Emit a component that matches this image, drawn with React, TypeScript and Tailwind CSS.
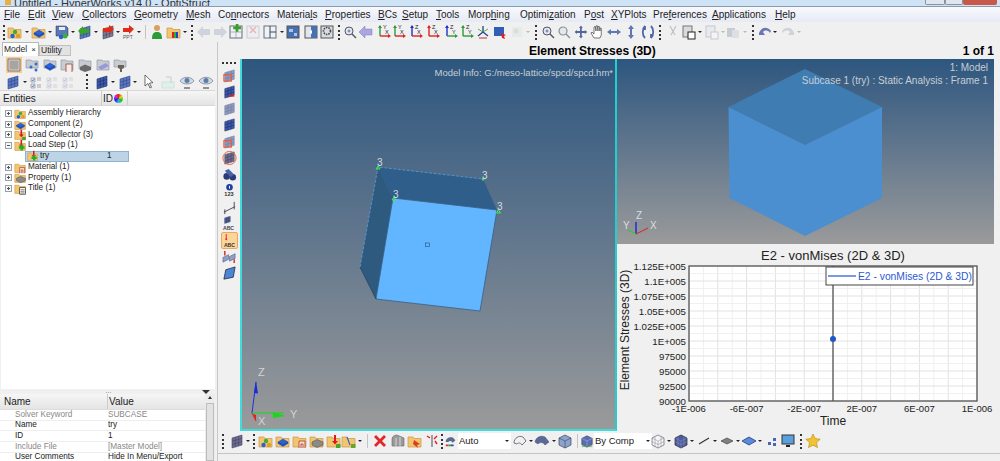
import { ReactNode } from "react";

const FONT = "font-['Liberation_Sans',Arial,sans-serif]";

const folder = <path d="M1 4h5l1 1.5h7V14H1z" fill="#f2c66e" stroke="#c9944a" strokeWidth=".7" />;
const grid = (a: string, b: string) => (
  <g stroke={b} strokeWidth=".6">
    <path d="M3 5l10-3v10L3 15z" fill={a} />
    <path d="M6.3 4v10M9.6 3v10M3 8.3l10-3M3 11.6l10-3" fill="none" />
  </g>
);
const disc = (c: string) => <path d="M3 9l5-3 5 3-5 3z M3 9v1.5l5 3 5-3V9l-5 3z" fill={c} stroke="#123a8c" strokeWidth=".4" />;
const down = <path d="M6 1v6H4l3 3.5L10 7H8V1z" fill="#e01818" />;
const win = <rect x="2" y="2" width="12" height="12" fill="#eef1f6" stroke="#66707c" />;
const axes = (a: string, b: string, l1: string, l2: string) => (
  <g>
    <path d="M4 2v10" stroke={a} strokeWidth="1.4" fill="none" />
    <path d="M4 12h9" stroke={b} strokeWidth="1.4" fill="none" />
    <path d="M4 1l-2 3h4z" fill={a} />
    <path d="M15 12l-3-2v4z" fill={b} />
    <text x="7" y="5" fontSize="5.5" fill="#223">{l1}</text>
    <text x="9" y="10" fontSize="5.5" fill="#223">{l2}</text>
  </g>
);

const ICONS: Record<string, ReactNode> = {
  fAsm: <>{folder}<circle cx="8" cy="8" r="2.2" fill="#3fae35" /><circle cx="5.5" cy="12" r="2.2" fill="#2f5fd0" /><circle cx="11" cy="12" r="2.2" fill="#e0a020" /></>,
  fComp: <>{folder}{disc("#2a62d8")}</>,
  fMat: <>{folder}<path d="M7 15V8h6v7M9 15v-4h2v4" fill="#f6dccf" stroke="#b03a26" strokeWidth=".8" /></>,
  fProp: <>{folder}<path d="M3 9l5-2.5 6 2.5v3l-6 2.5L3 12z" fill="#8a8a8a" stroke="#444" strokeWidth=".5" /></>,
  fLoad: <>{folder}<g transform="translate(2 1)">{down}</g><rect x="10" y="11" width="4.5" height="4" fill="#4aa52a" /></>,
  fStep: <>{folder}<g transform="translate(2 0)">{down}</g><path d="M6 9h2V7h3v2h2v3h-2v2H8v-2H6z" fill="#22b02a" /></>,
  fTitle: <>{folder}<rect x="7" y="7" width="7" height="8" fill="#f5f5f5" stroke="#222" strokeWidth=".8" /><path d="M8 9.500h5M8 11.500h5M8 13.500h5" stroke="#222" strokeWidth=".6" /></>,
  fRain: <>{folder}<rect x="6" y="8" width="2" height="6" fill="#e02020" /><rect x="8" y="8" width="2" height="6" fill="#30b030" /><rect x="10" y="8" width="2" height="6" fill="#2040d0" /></>,
  fLine: <>{folder}<path d="M6 4l3 8" stroke="#3060d0" strokeWidth="1.2" /><rect x="10" y="11" width="4.500" height="4" fill="#6aa52a" /></>,
  fRed: <>{folder}<path d="M7 7l6 4-3 1 1 3-5-4z" fill="#e03a20" /></>,
  save: <><path d="M2 2h10l2 2v8H2z" fill="#5878b8" stroke="#334" strokeWidth=".5" /><rect x="5" y="3" width="6" height="3" fill="#e8edf5" /><circle cx="11" cy="12" r="2.500" fill="#3fae35" /><circle cx="7" cy="13" r="2.200" fill="#2f5fd0" /></>,
  imp: <>{grid("#5b78c4", "#33478a")}<path d="M1 7l5-5v3h6v4H6v3z" fill="#37a81e" /></>,
  exp: <>{grid("#7d7d9a", "#44445c")}<path d="M14 5L9 1v3H3v4h6v2z" fill="#e02a1a" /></>,
  ppt: <><path d="M14 5L9 1v3H3v4h6v2z" fill="#e02a1a" /><text x="3" y="15" fontSize="5" fill="#555">PPT</text></>,
  person: <><circle cx="8" cy="4" r="3" fill="#d8a060" /><path d="M3 15c0-6 2-7 5-7s5 1 5 7z" fill="#2f9a3a" /></>,
  left: <path d="M1 8l6-6v3h7v6H7v3z" fill="#cfd4dc" />,
  right: <path d="M15 8L9 2v3H2v6h7v3z" fill="#cfd4dc" />,
  plus: <>{win}<path d="M2 8h12M8 2v12" stroke="#889" strokeWidth=".6" /><path d="M6 1h4v4h4v4h-4v4H6V9H2V5h4z" transform="scale(.65) translate(6 -1)" fill="#3aa02a" /></>,
  minus: <><rect x="2" y="2" width="12" height="12" fill="#eceef2" stroke="#c8ccd2" /><path d="M5 3l6 6M11 3L5 9" stroke="#e8b8b8" strokeWidth="1.500" /></>,
  split: <>{win}<path d="M8 2v12M8 8h6" stroke="#3a4654" strokeWidth="1" /></>,
  blueWin: <><rect x="2" y="2" width="12" height="12" fill="#4670b0" stroke="#555" /><rect x="4" y="5" width="4" height="3" fill="#a8c4ec" /><rect x="9" y="9" width="3" height="3" fill="#a8c4ec" /></>,
  halfWin: <><rect x="2" y="2" width="12" height="12" fill="#dfe6f0" stroke="#555" /><rect x="8" y="2" width="6" height="12" fill="#4670b0" /><path d="M6 8l3-2v4z" fill="#fff" /></>,
  gearWin: <><rect x="2" y="2" width="12" height="12" fill="#d8dce4" stroke="#555" /><circle cx="8" cy="7" r="3.500" fill="none" stroke="#444" strokeWidth="1.600" strokeDasharray="1.500 1" /></>,
  mag: <><circle cx="7" cy="7" r="4" fill="#dfe8f2" stroke="#556" strokeWidth="1" /><path d="M10 10l4 4" stroke="#556" strokeWidth="1.500" /><path d="M5.500 7h3M7 5.500v3" stroke="#556" strokeWidth=".7" /></>,
  arr: <path d="M1 8l6-6v3h7v6H7v3z" fill="#a9a6e0" stroke="#7d7cc0" strokeWidth=".5" />,
  axYX: axes("#2f9a3a", "#e02020", "Y", "X"),
  axZX: axes("#2030d0", "#e02020", "Z", "X"),
  axZXr: axes("#e02020", "#e02020", "Z", "X"),
  axZY: axes("#2030d0", "#2f9a3a", "Z", "Y"),
  axZYg: axes("#2f9a3a", "#2f9a3a", "Z", "Y"),
  triad: <><path d="M8 8V2M8 8l-5 4M8 8l5 4" stroke="#27408a" strokeWidth="1.300" /><path d="M8 8l-5-3M8 8l5-3" stroke="#2f9a3a" strokeWidth=".8" /><path d="M4 14h8" stroke="#c03020" strokeWidth="1" /></>,
  screen: <><rect x="2" y="3" width="10" height="9" fill="#2f5fb8" /><path d="M9 9l5 2-2 1 1 3-3-1z" fill="#e02020" /></>,
  ghost: <><rect x="3" y="3" width="10" height="10" fill="#dbe6dc" /><circle cx="7" cy="7" r="2.500" fill="#b8c8b0" /></>,
  magDim: <><circle cx="7" cy="7" r="4" fill="#e4e8ee" stroke="#8a8f98" strokeWidth="1.200" /><path d="M10 10l4 4" stroke="#8a8f98" strokeWidth="1.500" /></>,
  cross: <path d="M8 1.500l1.800 2.500H8.800v3h3V6l2.500 2-2.500 2V9h-3v3h1L8 14.500 6 12h1V9H4v1L1.500 8 4 6v1h3V4H6z" fill="#5468a0" />,
  hand: <path d="M5 14L2 9l1-1 2 2V3l1.300-.500L7 7V2l1.300-.300L9 7V2.500l1.300 0L11 7V4l1.300.3V11L11 14z" fill="#fff" stroke="#444" strokeWidth=".7" />,
  lr: <path d="M1 8l4-3v2h6V5l4 3-4 3V9H5v2z" fill="#6078b0" />,
  ud: <path d="M8 1l3 4H9v6h2l-3 4-3-4h2V5H5z" fill="#6078b0" />,
  rot: <path d="M5 2C2 5 2 11 5 14M11 2c3 3 3 9 0 12M5 2v4M11 14v-4" fill="none" stroke="#4c66a8" strokeWidth="1.800" />,
  cut: <path d="M5 2l5 9M11 2L6 11" stroke="#bcc0c8" strokeWidth="1.200" fill="none" />,
  paste: <><rect x="2" y="2" width="9" height="11" fill="#d8dade" stroke="#777" /><rect x="7" y="8" width="7" height="7" fill="#fff" stroke="#222" /></>,
  pasteDim: <><rect x="2" y="2" width="9" height="11" fill="#e8eaee" stroke="#c4c8ce" /><rect x="7" y="8" width="7" height="7" fill="#f4f4f4" stroke="#c4c8ce" /></>,
  copyDim: <><rect x="2" y="4" width="8" height="9" fill="#c8ccd2" /><rect x="7" y="6" width="7" height="8" fill="#dcdfe4" /></>,
  undo: <path d="M2 9c2-6 8-7 12-2l-1 2c-2-3-5-3-7-1l2 3H2z" fill="#6a78b8" />,
  redo: <path d="M14 9C12 3 6 2 2 7l1 2c2-3 5-3 7-1L8 11h6z" fill="#cfd2da" />,
  cursor: <path d="M4 1v11l3-2.500 2 4.500 1.500-.700-2-4.300 3.500-.300z" fill="#fff" stroke="#333" strokeWidth=".7" />,
  note: <><rect x="2" y="8" width="12" height="6" fill="#dff0ee" stroke="#cfe2d8" /><path d="M6 3h5v6" stroke="#c8ccc4" fill="none" /></>,
  eye: <><path d="M1 7c3-5 11-5 14 0-3 4-11 4-14 0z" fill="#d0dce6" stroke="#667" strokeWidth=".6" /><circle cx="8" cy="6.500" r="2.500" fill="#5c7caa" /><path d="M5 14h6" stroke="#333" strokeWidth="1" /></>,
  gNet: <><path d="M2 3h5l1 1h6v7H2z" fill="#c8ccd2" stroke="#8a8f98" strokeWidth=".6" /><circle cx="12" cy="7" r="1.500" fill="#2f6fd0" /><circle cx="7" cy="10" r="1.500" fill="#2f6fd0" /><circle cx="12" cy="13" r="1.500" fill="#2f6fd0" /></>,
  gBlue: <><path d="M2 3h5l1 1h6v7H2z" fill="#c8ccd2" stroke="#8a8f98" strokeWidth=".6" />{disc("#2a62d8")}</>,
  gMat: <><path d="M2 3h5l1 1h6v9H2z" fill="#c8ccd2" stroke="#8a8f98" strokeWidth=".6" /><path d="M7 15V7h6v8" fill="#eee" stroke="#b03a26" strokeWidth=".8" /></>,
  gProp: <><path d="M2 3h5l1 1h6v8H2z" fill="#c8ccd2" stroke="#8a8f98" strokeWidth=".6" /><path d="M3 10l5-2.500 6 2.500v3l-6 2L3 13z" fill="#6a6a6a" /></>,
  gWave: <><path d="M2 3h5l1 1h6v9H2z" fill="#c8ccd2" stroke="#8a8f98" strokeWidth=".6" /><path d="M3 10l8-4 3 3-8 4z" fill="#9a98d8" /></>,
  gBolt: <><path d="M2 3h5l1 1h6v6H2z" fill="#c8ccd2" stroke="#8a8f98" strokeWidth=".6" /><path d="M6 8h6v3l-2 1v3H8v-3L6 11z" fill="#6a6458" /></>,
  solidOn: <><rect x="-1" y="-1" width="18" height="18" fill="#fcc98c" /><path d="M2 2h12v12H2z" fill="#a8a4a0" stroke="#7c7c7c" /><path d="M3 3h10v10H3z" fill="none" stroke="#ececec" strokeWidth=".6" /></>,
  mesh: grid("#5b78c4", "#33478a"),
  meshDim: grid("#8e9ac0", "#707c9c"),
  meshDark: grid("#3d5ba8", "#1f2f6c"),
  meshGray: grid("#6c6c94", "#44445c"),
  table: <><path d="M3 4h4v4H3zM3 10h4v4H3z" fill="#dfe6f4" stroke="#888" strokeWidth=".6" /><path d="M9 4h4M9 6h4M9 11h4M9 13h4" stroke="#888" strokeWidth=".7" /><path d="M3.800 6l1 1 1.500-2.200M3.800 12l1 1 1.500-2.200" stroke="#2a62d8" fill="none" strokeWidth=".7" /></>,
  vecA: <>{grid("#8e9ac0", "#707c9c")}<rect x="2" y="7" width="8" height="7" fill="none" stroke="#ef5a3c" strokeWidth="1.200" /></>,
  vecB: <>{grid("#3d5ba8", "#1f2f6c")}<path d="M7 13h6l-2-2v1.200H8z" fill="#e02020" stroke="#e02020" strokeWidth=".8" /></>,
  vecC: <>{grid("#6c6c94", "#44445c")}<circle cx="8" cy="8.500" r="7" fill="none" stroke="#ef5a3c" strokeWidth="1" /></>,
  bino: <><circle cx="5" cy="10" r="3.500" fill="#2a3c78" /><circle cx="11.500" cy="11" r="3.500" fill="#2a3c78" /><path d="M3 4l4-2 6 6-4 3z" fill="#4c62a4" /></>,
  info: <><circle cx="8" cy="4.500" r="3.500" fill="#2040a0" /><path d="M8 3v3" stroke="#fff" strokeWidth="1" /><text x="2.500" y="14" fontSize="6" fontWeight="bold" fill="#333">123</text></>,
  graph: <path d="M2 13l12-6M3 10v5M13 2v8" stroke="#445" strokeWidth="1" fill="none" />,
  abc: <><g transform="translate(1 -1) scale(.6)">{grid("#4c62a4", "#334")}</g><text x="1" y="15" fontSize="5.500" fontWeight="bold" fill="#444">ABC</text></>,
  abcOn: <><path d="M4 1v5H3l1.500 2L6 6H5V1z" fill="#e02020" /><text x="2" y="15" fontSize="5.500" fontWeight="bold" fill="#333">ABC</text></>,
  flag: <><path d="M1 9l6-3v5l-6 3zM8 8l6-3v5l-6 3z" fill="#8ca0d0" stroke="#445" strokeWidth=".5" /><path d="M3 2v5" stroke="#e02020" strokeWidth="1.500" /><path d="M13 11v4" stroke="#e02020" strokeWidth="1.500" /></>,
  plate: <path d="M4 4l10-3-2 11-10 2z" fill="#4a86d8" stroke="#223" strokeWidth=".8" />,
  rainAuto: <><path d="M2 9c0-4 4-6 8-5l3 3-3 3C8 7 6 8 5 9z" fill="#5a6a90" /><rect x="2" y="12" width="3" height="2" fill="#e03030" /><rect x="5" y="12" width="3" height="2" fill="#30a030" /><rect x="8" y="12" width="3" height="2" fill="#3040d0" /></>,
  cubeBlue: <><path d="M2 5l6-3 6 3v7l-6 3-6-3z" fill="#5c6cb0" stroke="#2c3468" strokeWidth=".6" /><path d="M2 5l6 3 6-3M8 8v7" stroke="#aab4dc" strokeWidth=".6" fill="none" /><rect x="2" y="13" width="12" height="2" fill="#50a050" opacity=".6" /></>,
  outline: <path d="M2 10c0-5 5-8 9-6l3 4-4 4C8 9 6 10 5 11z" fill="#f0f0f0" stroke="#556" strokeWidth=".8" />,
  curve: <path d="M1 9c1-5 6-7 10-5l4 5-4 3c-2-3-5-3-7-1z" fill="#5a6a98" stroke="#3a456c" strokeWidth=".5" />,
  box: <><path d="M2 5l6-3 6 3v7l-6 3-6-3z" fill="#8aa4d0" stroke="#445" strokeWidth=".7" /><path d="M2 5l6 3 6-3M8 8v7" stroke="#445" strokeWidth=".6" fill="none" /></>,
  wire: <><path d="M2 5l6-3 6 3v7l-6 3-6-3z" fill="#f5f5f5" stroke="#667" strokeWidth=".7" /><path d="M2 8.500l6 3 6-3M5 3.500v10M11 3.500v10M2 5l6 3 6-3M8 8v7" stroke="#889" strokeWidth=".5" fill="none" /></>,
  meshBox: <><path d="M2 5l6-3 6 3v7l-6 3-6-3z" fill="#4c5c9c" stroke="#223" strokeWidth=".7" /><path d="M2 8.500l6 3 6-3M5 3.500v10M11 3.500v10M2 5l6 3 6-3M8 8v7" stroke="#9aa4cc" strokeWidth=".4" fill="none" /></>,
  slash: <path d="M3 11l10-6" stroke="#333" strokeWidth="1.200" />,
  flat: <path d="M2 8l6-3 6 3-6 3z" fill="#808080" stroke="#333" strokeWidth=".6" />,
  flatBlue: <path d="M1 8l7-4 7 4-7 4z" fill="#5a8ad8" stroke="#223a88" strokeWidth=".8" />,
  nodes: <path d="M4 9h3v3H4zM9 5h3v3H9zM9 10h3v3H9z" fill="#4a66b0" />,
  monitor: <><rect x="2" y="2" width="12" height="9" fill="#5aa0dc" stroke="#333" /><path d="M6 13h4" stroke="#222" strokeWidth="2" /></>,
  star: <path d="M8 1l2.200 4.600 5 .6-3.700 3.400 1 5L8 12.200 3.500 14.600l1-5L.8 6.200l5-.6z" fill="#f2c230" stroke="#b8871c" strokeWidth=".6" />,
  redX: <path d="M2 4l2-2 4 4 4-4 2 2-4 4 4 4-2 2-4-4-4 4-2-2 4-4z" fill="#e02a2a" />,
  stack: <><path d="M2 13V6c0-3 3-4 5-4l7 3v8z" fill="#9a9a9a" stroke="#666" strokeWidth=".6" /><path d="M6 14V5M10 14V4" stroke="#d8d8d8" /></>,
  pin: <><path d="M8 2v12" stroke="#667" strokeWidth="1.200" /><path d="M3 3l3 2M13 3l-3 3M11 8l2 3" stroke="#e02020" strokeWidth="1.400" /></>,
};

function Ico({ k, size = 16, dim }: { k: string; size?: number; dim?: boolean }) {
  return (
    <svg viewBox="0 0 16 16" width={size} height={size} className={dim ? "shrink-0 opacity-40" : "shrink-0"}>
      {ICONS[k]}
    </svg>
  );
}

const Caret = ({ dim }: { dim?: boolean }) => (
  <span className={dim ? "border-x-2 border-t-2 border-x-transparent border-t-[#b8b8b8]" : "border-x-2 border-t-2 border-x-transparent border-t-[#222]"} />
);

// one toolbar: [icon | "^" caret | "^-" dim caret | ":" grip | "|" separator, slot width class, dim]
type Slot = [string, string, boolean?];

function Bar({ items }: { items: Slot[] }) {
  return (
    <>
      {items.map(([k, w, dim], i) => (
        <div key={i} className={`${w} flex h-full shrink-0 items-center justify-center`}>
          {k === "^" ? <Caret /> : k === "^-" ? <Caret dim /> : k === ":" ? (
            <span className="h-[15px] border-l-2 border-dotted border-[#333]" />
          ) : k === "|" ? (
            <span className="h-[14px] border-l border-[#c4c4c4]" />
          ) : (
            <Ico k={k} dim={dim} />
          )}
        </div>
      ))}
    </>
  );
}

const MAIN_BAR: Slot[] = [
  [":", "w-[7px]"], ["fAsm", "w-[16px]"], ["^", "w-[8px]"], ["fComp", "w-[15px]"], ["^", "w-[8px]"], ["save", "w-[15px]"], ["^", "w-[8px]"], ["imp", "w-[15px]"], ["^", "w-[8px]"], ["exp", "w-[15px]"], ["^", "w-[5px]"], ["ppt", "w-[15px]"], ["^", "w-[8px]"], ["|", "w-[4px]"],
  ["person", "w-[19px]"], ["fRain", "w-[16px]"], ["^", "w-[6px]"], [":", "w-[8px]"], ["left", "w-[16px]"], ["right", "w-[16px]"], ["plus", "w-[16px]"], ["minus", "w-[17px]"], ["split", "w-[18px]"], ["^", "w-[6px]"], ["blueWin", "w-[16px]"], ["halfWin", "w-[19px]"], ["gearWin", "w-[14px]"], [":", "w-[9px]"],
  ["mag", "w-[13px]"], ["arr", "w-[20px]"], ["axYX", "w-[15px]"], ["axYX", "w-[16px]"], ["axZX", "w-[17px]"], ["axZXr", "w-[18px]"], ["axZY", "w-[17px]"], ["axZYg", "w-[16px]"], ["triad", "w-[16px]"], ["screen", "w-[18px]"], ["ghost", "w-[15px]", true], ["^-", "w-[8px]"], [":", "w-[8px]"],
  ["mag", "w-[15px]"], ["magDim", "w-[18px]"], ["cross", "w-[15px]"], ["hand", "w-[18px]"], ["lr", "w-[16px]"], ["ud", "w-[18px]"], ["rot", "w-[15px]"], [":", "w-[9px]"],
  ["cut", "w-[17px]"], ["paste", "w-[16px]"], ["^", "w-[6px]"], ["pasteDim", "w-[17px]"], ["^-", "w-[5px]"], ["copyDim", "w-[16px]"], ["^-", "w-[7px]"], [":", "w-[10px]"], ["undo", "w-[13px]"], ["^", "w-[8px]"], ["redo", "w-[17px]"], ["^-", "w-[6px]"],
];

const BOTTOM_A: Slot[] = [
  [":", "w-[10px]"], ["meshGray", "w-[17px]"], ["^", "w-[6px]"], [":", "w-[6px]"], ["fAsm", "w-[17px]"], ["fComp", "w-[17px]"], ["fMat", "w-[17px]"], ["fProp", "w-[17px]"], ["fLoad", "w-[17px]"], ["fLine", "w-[14px]"], ["^", "w-[7px]"], ["|", "w-[8px]"], ["redX", "w-[18px]"], ["stack", "w-[17px]"], ["fRed", "w-[17px]"], ["pin", "w-[17px]"], [":", "w-[4px]"],
];
const BOTTOM_B: Slot[] = [
  ["outline", "w-[18px]"], ["^", "w-[4px]"], ["curve", "w-[18px]"], ["^", "w-[5px]"], ["box", "w-[18px]"], ["|", "w-[6px]"],
];
const BOTTOM_C: Slot[] = [
  ["wire", "w-[12px]"], ["^", "w-[10px]"], ["meshBox", "w-[14px]"], ["^", "w-[8px]"], ["slash", "w-[16px]"], ["^", "w-[6px]"], ["flat", "w-[18px]"], ["^", "w-[4px]"], ["flatBlue", "w-[17px]"], ["^", "w-[6px]"], ["nodes", "w-[18px]"], ["monitor", "w-[14px]"], [":", "w-[12px]"], ["star", "w-[12px]"],
];

const PANEL_A: Slot[] = [["solidOn", "w-[18px]"], ["gNet", "w-[18px]"], ["gBlue", "w-[17px]"], ["gMat", "w-[18px]"], ["gProp", "w-[18px]"], ["gWave", "w-[17px]"], ["gBolt", "w-[17px]"]];
const PANEL_B: Slot[] = [
  ["mesh", "w-[17px]"], ["^", "w-[7px]"], ["table", "w-[16px]"], ["table", "w-[16px]", true], ["table", "w-[16px]", true], [":", "w-[21px]"], ["meshDark", "w-[10px]"], ["^", "w-[12px]"], ["mesh", "w-[12px]"], ["^", "w-[8px]"], ["cursor", "w-[20px]"], ["note", "w-[18px]"], ["eye", "w-[20px]"], ["eye", "w-[18px]"],
];

const STRIP = ["vecA", "vecB", "meshDim", "meshDark", "vecA", "vecC", "bino", "info", "graph", "abc", "abcOn", "flag", "plate"];

const MENUS: [ReactNode, string][] = [
  [<><u>F</u>ile</>, "w-[24px]"], [<><u>E</u>dit</>, "w-[24px]"], [<><u>V</u>iew</>, "w-[30px]"], [<><u>C</u>ollectors</>, "w-[52px]"], [<><u>G</u>eometry</>, "w-[52px]"], [<><u>M</u>esh</>, "w-[32px]"], [<>Co<u>n</u>nectors</>, "w-[59px]"], [<>Materia<u>l</u>s</>, "w-[48px]"], [<><u>P</u>roperties</>, "w-[53px]"], [<><u>B</u>Cs</>, "w-[24px]"], [<><u>S</u>etup</>, "w-[34px]"], [<><u>T</u>ools</>, "w-[32px]"], [<>Morp<u>h</u>ing</>, "w-[52px]"], [<>Optimi<u>z</u>ation</>, "w-[64px]"], [<>P<u>o</u>st</>, "w-[27px]"], [<><u>X</u>YPlots</>, "w-[42px]"], [<>Pre<u>f</u>erences</>, "w-[59px]"], [<><u>A</u>pplications</>, "w-[63px]"], [<><u>H</u>elp</>, "w-[30px]"],
];

const TREE: [string, string, boolean][] = [
  ["fAsm", "Assembly Hierarchy", false], ["fComp", "Component (2)", false], ["fLoad", "Load Collector (3)", false], ["fStep", "Load Step (1)", true],
];
const TREE_B: [string, string][] = [["fMat", "Material (1)"], ["fProp", "Property (1)"], ["fTitle", "Title (1)"]];

const PROPS: [string, string, boolean][] = [
  ["Solver Keyword", "SUBCASE", true], ["Name", "try", false], ["ID", "1", false], ["Include File", "[Master Model]", true], ["User Comments", "Hide In Menu/Export", false],
];

function TreeRow({ icon, label, open }: { icon: string; label: string; open?: boolean }) {
  return (
    <div className="flex h-[10.7px] items-center pl-[4px]">
      <span className="relative mr-[2px] h-[7px] w-[7px] border border-[#9aa0a8] bg-[#f4f6fa]">
        <span className="absolute left-[1px] top-[2px] h-px w-[3px] bg-[#555]" />
        {!open && <span className="absolute left-[2px] top-[1px] h-[3px] w-px bg-[#555]" />}
      </span>
      <Ico k={icon} size={13} />
      <span className="ml-px text-[8.2px] text-[#222]">{label}</span>
    </div>
  );
}

const Y_LABELS = ["1.125E+005", "1.1E+005", "1.075E+005", "1.05E+005", "1.025E+005", "1E+005", "97500", "95000", "92500", "90000"];
const X_LABELS = ["-1E-006", "-6E-007", "-2E-007", "2E-007", "6E-007", "1E-006"];

function Chart() {
  const left = 72, right = 360, top = 22, bottom = 157;
  const vs = Array.from({ length: 21 }, (_, i) => left + (i * (right - left)) / 20);
  const hs = Array.from({ length: 19 }, (_, i) => top + (i * (bottom - top)) / 18);
  return (
    <svg viewBox="0 0 377 186" width={377} height={186} className="block bg-[#f0f0f0]" fontFamily="Liberation Sans, Arial, sans-serif">
      <text x="216" y="16" textAnchor="middle" fontSize="13" fill="#222">E2 - vonMises (2D &amp; 3D)</text>
      <rect x={left} y={top} width={right - left} height={bottom - top} fill="#fff" />
      {vs.map((x, i) => <path key={i} d={`M${x} ${top}V${bottom}`} stroke={i % 2 ? "#f0f0f0" : "#e2e2e2"} strokeWidth="1" />)}
      {hs.map((y, i) => <path key={i} d={`M${left} ${y}H${right}`} stroke={i % 2 ? "#f0f0f0" : "#e2e2e2"} strokeWidth="1" />)}
      <rect x={left} y={top} width={right - left} height={bottom - top} fill="none" stroke="#555" strokeWidth="1.300" />
      <path d="M216 22V157" stroke="#555" strokeWidth="1.300" />
      <circle cx="216" cy="95" r="3" fill="#1f55d0" />
      {Y_LABELS.map((t, i) => <text key={t} x="69" y={25.500 + i * 15} textAnchor="end" fontSize="9.700" fill="#222">{t}</text>)}
      {X_LABELS.map((t, i) => <text key={t} x={72 + i * 57.600} y="168" textAnchor="middle" fontSize="9.500" fill="#222">{t}</text>)}
      <text x="216" y="181" textAnchor="middle" fontSize="12" fill="#222">Time</text>
      <text transform="translate(12 86) rotate(-90)" textAnchor="middle" fontSize="12" fill="#222">Element Stresses (3D)</text>
      <rect x="209" y="23" width="147" height="18" fill="#fff" stroke="#444" />
      <path d="M211 32H239" stroke="#1f55d0" strokeWidth="1.200" />
      <text x="241" y="35.500" fontSize="10.300" fill="#2a5ad0">E2 - vonMises (2D &amp; 3D)</text>
    </svg>
  );
}

export default function App() {
  return (
    <div className={`${FONT} flex h-[461px] w-[1000px] flex-col overflow-hidden bg-[#f0f0f0] text-[#222]`}>
      {/* window title, cut off by the top of the shot */}
      <div className="flex h-[7px] shrink-0 items-end overflow-hidden border-b border-[#8f9aa8] bg-[#cfe3f6] pl-[5px]">
        <span className="mr-[3px] mb-px h-[6px] w-[6px] bg-[#e8b040]" />
        <span className="-mb-[3px] flex-1 text-[11px] leading-[11px] text-[#333]">Untitled - HyperWorks v14.0 - OptiStruct</span>
        <div className="mr-[3px] flex h-[5px] self-start">
          <span className="w-[20px] rounded-b-[2px] border border-t-0 border-[#8a94a0] bg-[#dfe6ee]" />
          <span className="w-[18px] rounded-b-[2px] border border-t-0 border-[#8a94a0] bg-[#dfe6ee]" />
          <span className="w-[34px] rounded-b-[2px] bg-[#c8584a]" />
        </div>
      </div>

      <div className="flex h-[15px] shrink-0 items-center bg-gradient-to-b from-[#f8f9fd] to-[#e6eaf5] pl-[4px] text-[10px]">
        {MENUS.map(([m, w], i) => (
          <span key={i} className={`${w} shrink-0 whitespace-nowrap`}>{m}</span>
        ))}
      </div>

      <div className="flex h-[20px] shrink-0 items-center">
        <Bar items={MAIN_BAR} />
      </div>

      <div className="flex min-h-0 flex-1">
        {/* left browser */}
        <div className="flex w-[218px] shrink-0 flex-col border-r border-[#c8c8c8]">
          <div className="flex h-[14px] shrink-0 items-end pl-[2px] text-[8.5px]">
            <div className="flex h-[14px] w-[37px] items-center gap-[4px] border border-b-0 border-[#b8b8b8] bg-white pl-px">
              Model <span className="text-[8px]">×</span>
            </div>
            <div className="flex h-[11px] w-[32px] items-center border border-[#c0c0c0] bg-[#e2e2e2] pl-px">Utility</div>
          </div>
          <div className="ml-[5px] flex h-[17px] shrink-0 items-center">
            <Bar items={PANEL_A} />
          </div>
          <div className="ml-[4px] flex h-[17px] shrink-0 items-center">
            <Bar items={PANEL_B} />
          </div>
          <div className="mr-[2px] flex h-[16px] shrink-0 items-center border-y border-[#d8d8d8] bg-gradient-to-b from-[#f6f6f6] to-[#e4e4e4] pl-[3px] text-[10px]">
            <span className="w-[98px]">Entities</span>
            <span className="w-[13px] border-l border-[#ccc] pl-px">ID</span>
            <span className="h-[9px] w-[9px] rounded-full bg-[conic-gradient(#e02020,#e0e020,#20c020,#20c0e0,#2020e0,#e020e0,#e02020)]" />
            <span className="ml-[4px] h-full border-l border-[#ccc]" />
          </div>
          <div className="mr-[2px] ml-px h-[283px] shrink-0 overflow-hidden bg-white pt-[2px]">
            {TREE.map(([k, t, open]) => <TreeRow key={t} icon={k} label={t} open={open} />)}
            <div className="ml-[24px] flex h-[11px] w-[104px] items-center border border-[#8fb4cf] bg-[#bcd4e6] pl-px text-[8.2px]">
              <Ico k="fStep" size={12} />
              <span className="ml-px w-[67px]">try</span>
              <span>1</span>
            </div>
            {TREE_B.map(([k, t]) => <TreeRow key={t} icon={k} label={t} />)}
          </div>
          <div className="relative flex h-[5px] shrink-0 items-center justify-center text-[6px] leading-none">
            ···
            <span className="absolute top-[1px] right-[7px] border-x-[4px] border-t-[4px] border-x-transparent border-t-[#333]" />
          </div>
          <div className="mr-[2px] flex min-h-0 flex-1">
            <div className="min-w-0 flex-1 text-[8.2px]">
              <div className="flex h-[16px] items-center border-b border-[#ddd] bg-gradient-to-b from-[#f6f6f6] to-[#e4e4e4] pl-[4px] text-[10px]">
                <span className="w-[103px]">Name</span>
                <span className="border-l border-[#ccc] pl-px">Value</span>
              </div>
              {PROPS.map(([a, b, grey]) => (
                <div key={a} className={grey ? "flex h-[10.7px] items-center border-b border-[#eee] bg-white text-[#888]" : "flex h-[10.7px] items-center border-b border-[#eee] bg-white"}>
                  <span className="w-[108px] shrink-0 pl-[15px]">{a}</span>
                  <span className="whitespace-nowrap">{b}</span>
                </div>
              ))}
            </div>
            <div className="flex w-[10px] shrink-0 flex-col items-center bg-[#ececec] pt-[2px]">
              <span className="mb-[4px] border-x-[2px] border-b-[3px] border-x-transparent border-b-[#333]" />
              <span className="h-full w-[8px] border border-[#bcbcbc] bg-[#e2e2e2]" />
            </div>
          </div>
        </div>

        <div className="flex min-w-0 flex-1 flex-col">
          <div className="flex h-[17px] shrink-0 items-center pr-[6px] pl-[311px] text-[12px] font-bold text-black">
            <span className="flex-1">Element Stresses (3D)</span>
            <span>1 of 1</span>
          </div>

          <div className="flex h-[372px] shrink-0">
            <div className="flex w-[22px] shrink-0 flex-col items-center pt-[3px]">
              <span className="mb-[3px] h-0 w-[14px] border-t-2 border-dotted border-[#333]" />
              <div className="flex flex-col items-center">
                {STRIP.map((k, i) => (
                  <div key={i} className={k === "abcOn" ? "flex h-[16.500px] w-[17px] items-center justify-center rounded-[2px] border border-[#e8a860] bg-[#fcd59a]" : "flex h-[16.500px] w-[17px] items-center justify-center"}>
                    <Ico k={k} size={15} />
                  </div>
                ))}
              </div>
            </div>

            {/* main 3D view */}
            <div className="relative w-[377px] shrink-0 border-2 border-t-0 border-[#3fdcdc] border-r-[#22cfcf] bg-gradient-to-b from-[#2d567f] to-[#9a9a9a]">
              <span className="absolute top-[7px] right-[2px] text-[9.500px] whitespace-nowrap text-[#c6ced6]">Model Info: G:/meso-lattice/spcd/spcd.hm*</span>
              <svg viewBox="242 59 373 370" className="absolute top-0 left-0 h-[370px] w-[373px]" fontFamily="Liberation Sans, Arial, sans-serif">
                <path d="M378 167L393 198L376 299L360 267Z" fill="#2f5a80" />
                <path d="M378 167L483 179L497 210L393 198Z" fill="#2f5e8a" />
                <path d="M393 198L497 210L480 311L376 299Z" fill="#62b5ff" stroke="#3a5f82" strokeWidth=".8" />
                <path d="M360 267L378 167L483 179" fill="none" stroke="#5c9cd0" strokeWidth=".8" strokeDasharray="3 1.500" />
                <path d="M360 267L376 299" stroke="#24405c" strokeWidth=".8" />
                <rect x="425.500" y="243" width="4" height="3.500" fill="none" stroke="#2d5f8f" strokeWidth=".7" />
                <g fill="none" stroke="#3df04a" strokeWidth="1">
                  <path d="M378 166l2 3h-4z" />
                  <path d="M394 197l2 3h-4z" />
                  <path d="M498.500 210l2 3h-4z" />
                  <path d="M483 178l1 2h-2z" />
                </g>
                <g fontSize="10" fill="#d8dce0">
                  <text x="377" y="166">3</text>
                  <text x="393" y="198">3</text>
                  <text x="482" y="179">3</text>
                  <text x="497" y="210">3</text>
                </g>
                <path d="M252 413L256 382" stroke="#2030d8" strokeWidth="1" />
                <path d="M256 381l-2 12 4 .500z" fill="#1a2cd8" />
                <path d="M252 413H284" stroke="#18d818" strokeWidth="1" />
                <path d="M285 416l-12-4v6z" fill="#18d818" />
                <path d="M252 413l4 8" stroke="#e02020" strokeWidth="1" />
                <path d="M256 421l-3-7 3 1z" fill="#e02020" />
                <g fontSize="11" fill="#d0d4d8">
                  <text x="258" y="376">Z</text>
                  <text x="290" y="418">Y</text>
                  <text x="258" y="425">X</text>
                </g>
              </svg>
            </div>

            <div className="flex w-[377px] shrink-0 flex-col">
              <div className="relative h-[185px] shrink-0 bg-gradient-to-b from-[#2d567f] to-[#9a9a9a]">
                <svg viewBox="617 59 377 185" className="absolute top-0 left-0 h-[185px] w-[377px]" fontFamily="Liberation Sans, Arial, sans-serif">
                  <path d="M805 69L882 107L805 145L728.500 107Z" fill="#3f7cb2" />
                  <path d="M728.500 107L805 145L882 107V198L805 236L729.500 198Z" fill="#4b8fd1" />
                  <path d="M636 234V222" stroke="#1a2cd8" strokeWidth="1.500" />
                  <path d="M636 234l-8-4" stroke="#18d818" strokeWidth="1" />
                  <path d="M636 234l12-6" stroke="#e02020" strokeWidth="1" />
                  <g fontSize="10" fill="#d8dce0">
                    <text x="636" y="219">Z</text>
                    <text x="623" y="229">Y</text>
                    <text x="650" y="229">X</text>
                  </g>
                </svg>
                <div className="absolute top-[2px] right-[6px] text-right text-[10px] leading-[13px] whitespace-nowrap text-[#c6ced6]">
                  <div>1: Model</div>
                  <div>Subcase 1 (try) : Static Analysis : Frame 1</div>
                </div>
              </div>
              <Chart />
            </div>
          </div>

          <div className="flex h-[22px] shrink-0 items-center pb-[2px] text-[9.500px]">
            <Bar items={BOTTOM_A} />
            <Ico k="rainAuto" size={14} />
            <div className="flex h-[16px] w-[53px] items-center justify-between bg-white pr-[2px] pl-[1px]">
              Auto <Caret />
            </div>
            <Bar items={BOTTOM_B} />
            <Ico k="cubeBlue" size={14} />
            <div className="flex h-[16px] w-[58px] items-center justify-between bg-white pr-[2px] pl-[1px]">
              By Comp <Caret />
            </div>
            <Bar items={BOTTOM_C} />
          </div>
          <div className="flex-1 border-t border-[#c4c4c4]" />
        </div>
      </div>
    </div>
  );
}
